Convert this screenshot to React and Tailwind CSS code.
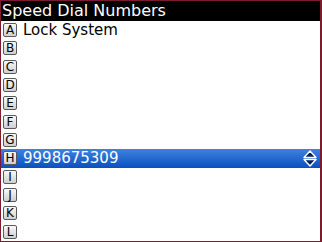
const letters = ['A', 'B', 'C', 'D', 'E', 'F', 'G', 'H', 'I', 'J', 'K', 'L']
const entries = { A: 'Lock System', H: '9998675309' }

function KeyCap({ letter }) {
  return (
    <div className="w-[14px] h-[14px] shrink-0 flex items-center justify-center rounded-[2px] border border-[#5a5a5a] bg-gradient-to-b from-[#fafafa] to-[#cfcfcf] text-[12px] leading-none text-black">
      {letter}
    </div>
  )
}

function Spinner() {
  return (
    <svg width="14" height="17" viewBox="0 0 14 17" className="ml-auto mr-[3px]">
      <path d="M7 1 L13 7.5 L1 7.5 Z" fill="#0a1f55" stroke="white" strokeWidth="1.4" strokeLinejoin="round" />
      <path d="M7 16 L13 9.5 L1 9.5 Z" fill="#0a1f55" stroke="white" strokeWidth="1.4" strokeLinejoin="round" />
    </svg>
  )
}

export default function App() {
  return (
    <div className="w-[322px] h-[242px] border border-[#7a1c2c] border-r-2 bg-white overflow-hidden flex flex-col" style={{ fontFamily: '"DejaVu Sans", sans-serif' }}>
      <div className="h-[20px] bg-black text-white text-[16px] leading-[20px] pl-[1px] shrink-0">
        Speed Dial Numbers
      </div>
      <div className="flex-1 grid grid-rows-12">
        {letters.map((l) => {
          const selected = l === 'H'
          return (
            <div
              key={l}
              className={
                'flex items-center pl-[2px] ' +
                (selected ? 'bg-gradient-to-b from-[#3d82e0] to-[#0b4fc0] text-white' : 'text-black')
              }
            >
              <KeyCap letter={l} />
              <span className="ml-[6px] text-[15px] leading-none">{entries[l]}</span>
              {selected && <Spinner />}
            </div>
          )
        })}
      </div>
    </div>
  )
}
